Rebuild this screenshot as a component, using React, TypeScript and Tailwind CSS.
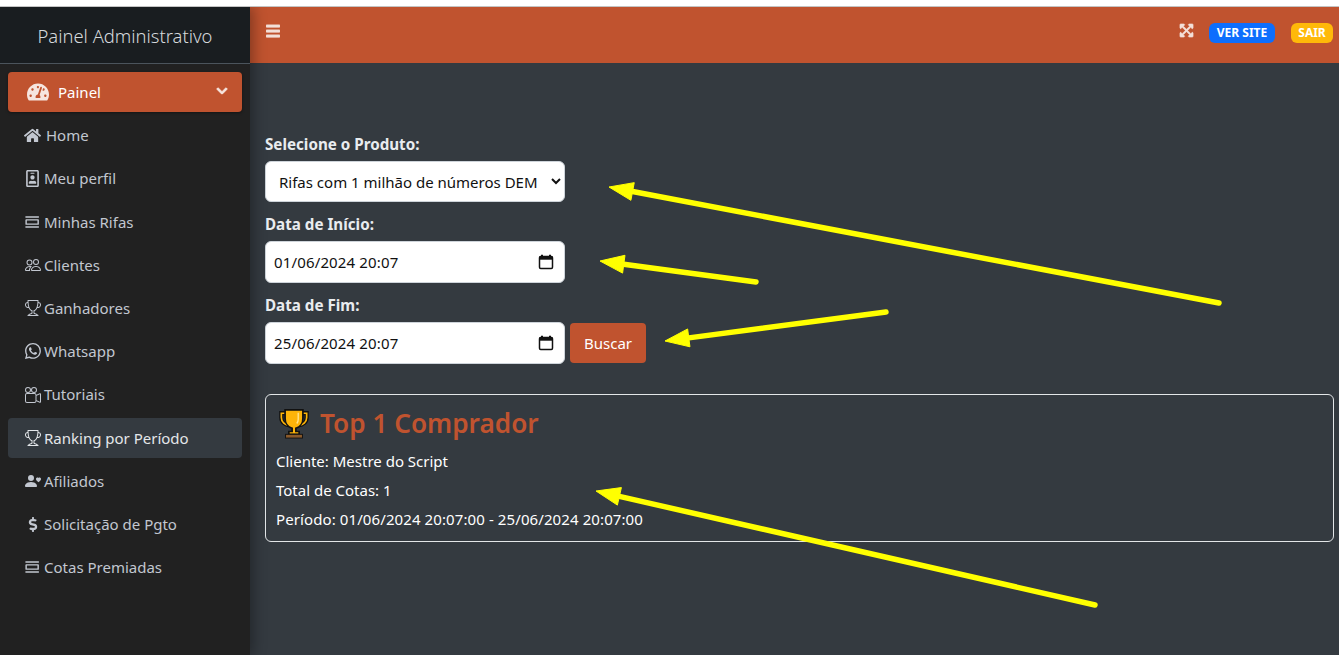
import { FaBars, FaChevronDown, FaDollarSign, FaExpandArrowsAlt, FaHome, FaRegIdBadge, FaTachometerAlt } from "react-icons/fa"
import { BsCameraReels, BsPeople, BsPersonHeart, BsTrophy, BsWhatsapp } from "react-icons/bs"
import { MdOutlineViewDay } from "react-icons/md"
import type { ReactNode } from "react"

const font = "font-['Segoe_UI','Noto_Sans','Open_Sans',sans-serif]"

const menu: { label: string; icon: ReactNode; active?: boolean; textClass?: string }[] = [
    { label: "Home", icon: <FaHome className="w-[19px] h-[17px]" />, textClass: "ml-[2px]" },
    { label: "Meu perfil", icon: <FaRegIdBadge className="w-[15px] h-[17px]" /> },
    { label: "Minhas Rifas", icon: <MdOutlineViewDay className="w-[18px] h-[18px]" /> },
    { label: "Clientes", icon: <BsPeople className="w-4 h-4" /> },
    { label: "Ganhadores", icon: <BsTrophy className="w-4 h-4" /> },
    { label: "Whatsapp", icon: <BsWhatsapp className="w-4 h-4" /> },
    { label: "Tutoriais", icon: <BsCameraReels className="w-4 h-4" /> },
    { label: "Ranking por Período", icon: <BsTrophy className="w-4 h-4" />, active: true },
    { label: "Afiliados", icon: <BsPersonHeart className="w-4 h-4" /> },
    { label: "Solicitação de Pgto", icon: <FaDollarSign className="w-4 h-[15px]" /> },
    { label: "Cotas Premiadas", icon: <MdOutlineViewDay className="w-[18px] h-[18px]" /> },
]

function MenuItem({ label, icon, active, textClass }: { label: string; icon: ReactNode; active?: boolean; textClass?: string }) {
    return <div className={`h-10 mb-[3.2px] pl-4 rounded flex items-center gap-[3px] text-[15px] ${active ? "bg-[#343a40] text-[#e4e7ea]" : "text-[#c2c7d0]"}`}>
        <span className="w-[17px] flex justify-center shrink-0">{icon}</span>
        <span className={textClass}>{label}</span>
    </div>
}

function DateField({ value }: { value: string }) {
    return <div className="w-[300px] h-[42px] bg-white border border-[#ced4da] rounded-md flex items-center pl-[8px] pr-[10px]">
        <input readOnly value={value} className="w-full min-w-0 outline-none text-[15px] tracking-[0.15px] text-[#111]" />
        <svg viewBox="0 0 16 16" className="w-[16px] h-[16px] shrink-0">
            <path d="M4 .8v2M12 .8v2" stroke="#111" strokeWidth="2" />
            <rect x="1.5" y="2.5" width="13" height="12" rx="1.2" fill="none" stroke="#111" strokeWidth="1.5" />
            <rect x="1.5" y="2.5" width="13" height="3.2" fill="#111" />
        </svg>
    </div>
}

function Trophy() {
    return <svg viewBox="0 0 32 32" className="w-[30px] h-[30px] shrink-0">
        <path d="M7 4.500H2.500V9c0 5 4 8 9 8.500M25 4.500h4.500V9c0 5-4 8-9 8.500" fill="none" stroke="#111" strokeWidth="4.500" />
        <path d="M7 4.500H2.500V9c0 5 4 8 9 8.500M25 4.500h4.500V9c0 5-4 8-9 8.500" fill="none" stroke="#fdb409" strokeWidth="1.800" />
        <path d="M6.500 1h19v9c0 6-4 9.500-7.500 10.500V24h3.500v3h-11v-3H14v-3.500C10.500 19.500 6.500 16 6.500 10z" fill="#fdb409" stroke="#111" strokeWidth="1.800" />
        <path d="M20.500 4v7c0 2-.7 3.500-1.500 4.500" fill="none" stroke="#ffe28a" strokeWidth="1.500" />
        <rect x="7" y="27" width="18" height="4" fill="#8a5a2b" stroke="#111" strokeWidth="1" />
    </svg>
}

function Arrow({ x1, y1, x2, y2 }: { x1: number; y1: number; x2: number; y2: number }) {
    // seta amarela desenhada a mao por cima do print
    const a = Math.atan2(y2 - y1, x2 - x1)
    const bx = x1 + Math.cos(a) * 24
    const by = y1 + Math.sin(a) * 24
    const nx = -Math.sin(a) * 9
    const ny = Math.cos(a) * 9
    return <g fill="#ffff00" stroke="#ffff00">
        <line x1={bx} y1={by} x2={x2} y2={y2} strokeWidth="5.5" strokeLinecap="round" />
        <polygon points={`${x1},${y1} ${bx + nx},${by + ny} ${bx - nx},${by - ny}`} strokeWidth="1" />
    </g>
}

export default function App() {
    return <div className={`${font} w-[1339px] h-[655px] bg-white pt-[6px] overflow-hidden relative`}>
        <div className="flex h-[649px] bg-[#343a40] border-t border-[#c4c4c4] overflow-hidden">
            <aside className="w-[250px] shrink-0 bg-[#212121] shadow-[4px_0_12px_rgba(0,0,0,0.3)] z-10">
                <div className="h-[57px] bg-[#191d20] border-b border-[#4b545c] flex items-center justify-center pt-[2px] text-[#d5d9dc] text-[18.4px] font-light">
                    Painel Administrativo
                </div>
                <nav className="px-2 pt-2">
                    <div className="h-10 mb-[3.5px] pl-[19px] pr-[14px] bg-[#c0532f] rounded flex items-center text-white text-[15px] shadow-[0_1px_3px_rgba(0,0,0,0.4)]">
                        <FaTachometerAlt className="w-[22px] h-[20px] mr-[9px] text-[#f6e5df]" />
                        <span>Painel</span>
                        <FaChevronDown className="w-[12px] h-[12px] ml-auto mb-[3px] text-[#f6e5df] stroke-current stroke-[40]" />
                    </div>
                    {menu.map(m => <MenuItem key={m.label} {...m} />)}
                </nav>
            </aside>
            <div className="flex-1 min-w-0">
                <header className="h-[56px] bg-[#c0532f] flex items-start pl-4 pr-[6px]">
                    <FaBars className="w-[14px] h-[16px] mt-[16px] text-[#f3e0d9] stroke-current stroke-[24]" />
                    <FaExpandArrowsAlt className="w-[15px] h-[15px] ml-auto mt-[16px] text-[#f3e0d9] stroke-current stroke-[20]" />
                    <span className="ml-[15px] mt-[16px] h-5 w-[66px] bg-[#0d6efd] rounded-md text-white text-[12px] font-bold flex items-center justify-center">VER SITE</span>
                    <span className="ml-4 mt-[16px] h-5 w-[42px] bg-[#ffb909] rounded-md text-white text-[12px] font-bold flex items-center justify-center">SAIR</span>
                </header>
                <main className="pl-[15px] pr-[5px] pt-[70px] text-[15px] text-white">
                    <label className="block h-[28px] text-[15.2px] font-bold text-[#e9ecef]">Selecione o Produto:</label>
                    <div className="w-[300px] h-[41px] bg-white border border-[#ced4da] rounded-md flex items-center">
                        <select className="w-full h-full pl-[9px] pr-[1px] outline-none text-[15px] text-[#111]">
                            <option>Rifas com 1 milhão de números DEM</option>
                        </select>
                    </div>
                    <label className="block h-[39px] pt-[11px] text-[15.2px] font-bold text-[#e9ecef]">Data de Início:</label>
                    <DateField value="01/06/2024 20:07" />
                    <label className="block h-[39px] pt-[11px] text-[15.2px] font-bold text-[#e9ecef]">Data de Fim:</label>
                    <div className="flex items-center gap-[5px]">
                        <DateField value="25/06/2024 20:07" />
                        <button className="w-[76px] h-10 bg-[#c0532f] rounded text-white text-[15px]">Buscar</button>
                    </div>
                    <section className="mt-[30px] h-[148px] border border-[#e3e6e8] rounded-md pl-[10px] pt-[10px]">
                        <div className="flex items-center h-[37px] gap-[11px] pl-[3px]">
                            <Trophy />
                            <h2 className="text-[26.2px] font-semibold text-[#c0532f]">Top 1 Comprador</h2>
                        </div>
                        <p className="mt-[8px] h-[29px]">Cliente: Mestre do Script</p>
                        <p className="h-[29px]">Total de Cotas: 1</p>
                        <p className="tracking-[0.1px]">Período: 01/06/2024 20:07:00 - 25/06/2024 20:07:00</p>
                    </section>
                </main>
            </div>
        </div>
        <svg viewBox="0 0 1339 655" className="absolute inset-0 w-[1339px] h-[655px] pointer-events-none z-20">
            <Arrow x1={609} y1={187} x2={1219} y2={303} />
            <Arrow x1={600} y1={261} x2={756} y2={282} />
            <Arrow x1={665} y1={341} x2={886} y2={312} />
            <Arrow x1={596} y1={491} x2={1095} y2={605} />
        </svg>
    </div>
}
